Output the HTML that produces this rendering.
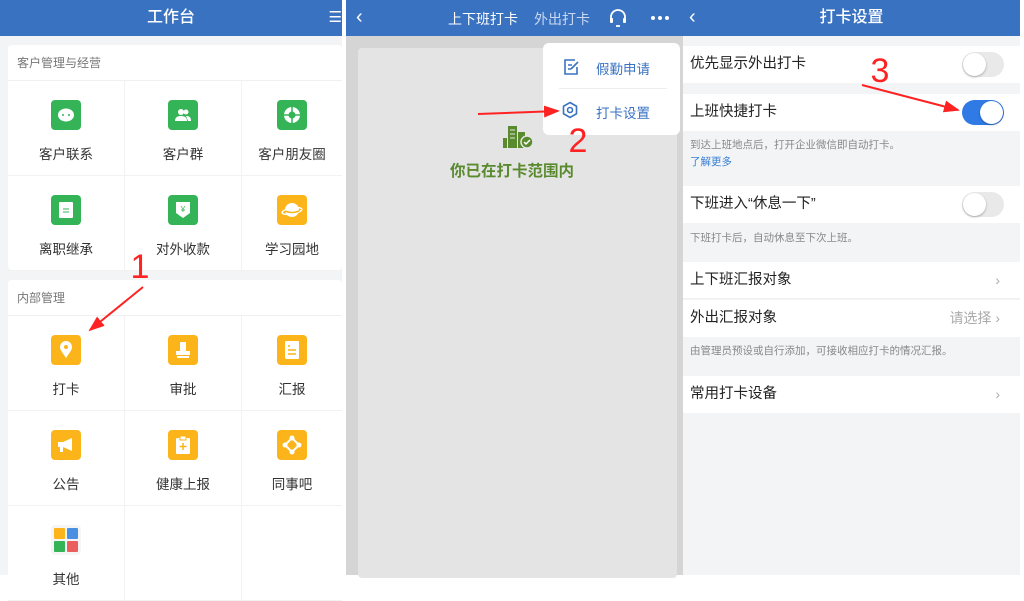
<!DOCTYPE html>
<html><head><meta charset="utf-8"><style>
*{margin:0;padding:0;box-sizing:border-box}
body{width:1024px;height:575px;overflow:hidden;background:#fff;font-family:"Liberation Sans","Noto Sans CJK SC",sans-serif;position:relative}
.abs{position:absolute}
.hdr{position:absolute;top:0;height:36px;background:#3a72c2;color:#fff;font-size:15px}
.p1{left:0;top:0;width:342px;height:575px;background:#f3f4f6}
.card{position:absolute;left:8px;width:334px;background:#fff;border-radius:4px}
.ch{height:36px;line-height:36px;padding-left:9px;font-size:12px;color:#777;border-bottom:1px solid #f0f0f0}
.grid{display:grid;grid-template-columns:117px 117px 100px}
.cell{height:95px;border-right:1px solid #f2f2f2;border-bottom:1px solid #f2f2f2;position:relative;text-align:center}
.cell:nth-child(3n){border-right:none}
.ic{position:absolute;left:50%;margin-left:-15px;top:19px;width:30px;height:30px;border-radius:4px;display:flex;align-items:center;justify-content:center}
.g{background:#35b357}.y{background:#fbb41a}
.lb{position:absolute;left:0;right:0;top:62px;font-size:13.5px;color:#333}
.p2{left:346px;top:0;width:337px;height:575px;background:#d5d5d5}
.p3{left:683px;top:0;width:337px;height:575px;background:#f3f4f6}
.row{position:absolute;left:0;width:337px;height:37px;background:#fff;font-size:14.5px;color:#222;line-height:37px;padding-left:7px}
.desc{position:absolute;left:7px;font-size:10.5px;color:#888}
.tg{position:absolute;left:279px;top:6px;width:42px;height:25px;border-radius:13px;background:#e9e9ea}
.tg::after{content:"";position:absolute;left:1px;top:1px;width:23px;height:23px;border-radius:50%;background:#fff;box-shadow:0 1px 2px rgba(0,0,0,.3)}
.tg.on{background:#2f7ae5}.tg.on::after{left:18px}
.arr{position:absolute;right:20px;top:0;color:#aaa;font-size:14px}
.tt{font-size:16px;font-weight:500}
</style></head><body>

<div class="abs p1">
 <div class="hdr tt" style="left:0;width:342px;text-align:center;line-height:36px">工作台<span style="position:absolute;right:0;top:0;font-size:15px">☰</span></div>
 <div class="card" style="top:45px;height:225px">
  <div class="ch">客户管理与经营</div>
  <div class="grid">
   <div class="cell"><div class="ic g"><svg width="18" height="16"><ellipse cx="9" cy="8" rx="8" ry="6.5" fill="#fff"/><circle cx="6" cy="8" r="1" fill="#35b357"/><circle cx="12" cy="8" r="1" fill="#35b357"/></svg></div><div class="lb">客户联系</div></div>
   <div class="cell"><div class="ic g"><svg width="18" height="16"><circle cx="7" cy="5" r="3" fill="#fff"/><path d="M1 14c0-4 3-5 6-5s6 1 6 5z" fill="#fff"/><circle cx="12" cy="5" r="2.5" fill="#fff"/><path d="M12 9c3 0 5 1 5 5h-3" fill="#fff"/></svg></div><div class="lb">客户群</div></div>
   <div class="cell"><div class="ic g"><svg width="18" height="18"><circle cx="9" cy="9" r="8" fill="#fff"/><circle cx="9" cy="9" r="3.5" fill="#35b357"/><path d="M9 1v5M17 9h-5M9 17v-5M1 9h5" stroke="#35b357" stroke-width="1.5"/></svg></div><div class="lb">客户朋友圈</div></div>
   <div class="cell"><div class="ic g"><svg width="14" height="16"><rect width="14" height="16" rx="1" fill="#fff"/><path d="M4 7h6M4 10h6" stroke="#35b357"/></svg></div><div class="lb">离职继承</div></div>
   <div class="cell"><div class="ic g"><svg width="16" height="18"><path d="M1 1h14v11l-7 5-7-5z" fill="#fff"/><text x="8" y="11" font-size="8" fill="#35b357" text-anchor="middle">¥</text></svg></div><div class="lb">对外收款</div></div>
   <div class="cell"><div class="ic y"><svg width="22" height="18"><circle cx="11" cy="9" r="7" fill="#fff"/><ellipse cx="11" cy="10" rx="10" ry="3" fill="none" stroke="#fff" stroke-width="1.5" transform="rotate(-10 11 10)"/><path d="M4 10q7 3 14 0" stroke="#fbb41a" stroke-width="1.5" fill="none"/></svg></div><div class="lb">学习园地</div></div>
  </div>
 </div>
 <div class="card" style="top:280px;height:300px">
  <div class="ch">内部管理</div>
  <div class="grid">
   <div class="cell"><div class="ic y"><svg width="14" height="18"><path d="M7 17C3 11 1 9 1 6a6 6 0 0112 0c0 3-2 5-6 11z" fill="#fff"/><circle cx="7" cy="6" r="2" fill="#fbb41a"/></svg></div><div class="lb">打卡</div></div>
   <div class="cell"><div class="ic y"><svg width="16" height="18"><rect x="5" y="1" width="6" height="9" rx="1" fill="#fff"/><rect x="1" y="10" width="14" height="4" fill="#fff"/><rect x="2" y="15" width="12" height="2" fill="#fff"/></svg></div><div class="lb">审批</div></div>
   <div class="cell"><div class="ic y"><svg width="14" height="18"><rect width="14" height="18" rx="1" fill="#fff"/><path d="M3 5h2M3 9h8M3 13h8" stroke="#fbb41a" stroke-width="1.5"/></svg></div><div class="lb">汇报</div></div>
   <div class="cell"><div class="ic y"><svg width="18" height="16"><path d="M1 5h5l9-4v13l-9-4H1z" fill="#fff"/><rect x="3" y="10" width="3" height="5" fill="#fff"/></svg></div><div class="lb">公告</div></div>
   <div class="cell"><div class="ic y"><svg width="14" height="18"><rect y="2" width="14" height="16" rx="1" fill="#fff"/><rect x="4" width="6" height="4" fill="#fff" stroke="#fbb41a"/><path d="M7 7v7M3.5 10.5h7" stroke="#fbb41a" stroke-width="1.5"/></svg></div><div class="lb">健康上报</div></div>
   <div class="cell"><div class="ic y"><svg width="20" height="20"><path d="M10 3L17 10L10 17L3 10Z" fill="none" stroke="#fff" stroke-width="2"/><circle cx="10" cy="3" r="2.5" fill="#fff"/><circle cx="17" cy="10" r="2.5" fill="#fff"/><circle cx="10" cy="17" r="2.5" fill="#fff"/><circle cx="3" cy="10" r="2.5" fill="#fff"/></svg></div><div class="lb">同事吧</div></div>
   <div class="cell"><div class="ic" style="background:#f5f5f5"><svg width="26" height="26"><rect x="1" y="1" width="11" height="11" rx="1" fill="#fbb41a"/><rect x="14" y="1" width="11" height="11" rx="1" fill="#4a90e2"/><rect x="1" y="14" width="11" height="11" rx="1" fill="#35b357"/><rect x="14" y="14" width="11" height="11" rx="1" fill="#ec5f5f"/></svg></div><div class="lb">其他</div></div>
   <div class="cell"></div><div class="cell"></div>
  </div>
 </div>
</div>

<div class="abs p2">
 <div class="hdr" style="left:0;width:337px">
  <span class="abs" style="left:10px;top:6px;font-size:20px">‹</span>
  <span class="abs" style="left:102px;top:9px;font-size:14px">上下班打卡</span>
  <span class="abs" style="left:188px;top:9px;font-size:14px;color:#c9d8ef">外出打卡</span>
  <svg class="abs" style="left:262px;top:8px" width="20" height="20"><path d="M3 11V9a7 7 0 0114 0v2" fill="none" stroke="#fff" stroke-width="1.8"/><rect x="2" y="10" width="3" height="5" rx="1" fill="#fff"/><rect x="15" y="10" width="3" height="5" rx="1" fill="#fff"/><path d="M8 18h4" stroke="#fff" stroke-width="1.8"/></svg>
  <svg class="abs" style="left:304px;top:15px" width="20" height="6"><circle cx="3" cy="3" r="2" fill="#fff"/><circle cx="10" cy="3" r="2" fill="#fff"/><circle cx="17" cy="3" r="2" fill="#fff"/></svg>
 </div>
 <div class="abs" style="left:12px;top:48px;width:319px;height:530px;background:#e4e4e4;border-radius:4px"></div>
 <svg class="abs" style="left:157px;top:124px" width="32" height="26"><rect x="0" y="14" width="4" height="10" fill="#5a8a2e"/><rect x="5" y="2" width="9" height="22" fill="#5a8a2e"/><rect x="15" y="8" width="7" height="16" fill="#5a8a2e"/><path d="M7 6h5M7 10h5M7 14h5" stroke="#e4e4e4"/><circle cx="24" cy="18" r="6" fill="#5a8a2e" stroke="#e4e4e4" stroke-width="1.5"/><path d="M21 18l2 2 4-4" stroke="#fff" stroke-width="1.5" fill="none"/></svg>
 <div class="abs" style="left:104px;top:159px;font-size:15.5px;color:#5a8a2e;font-weight:bold">你已在打卡范围内</div>
 <div class="abs" style="left:197px;top:43px;width:137px;height:92px;background:#fff;border-radius:6px">
  <svg class="abs" style="left:20px;top:16px" width="16" height="16"><path d="M12 1H2v14h12V8" fill="none" stroke="#3a72c2" stroke-width="1.6"/><path d="M5 6h4M5 10h3M8 10l7-7" stroke="#3a72c2" stroke-width="1.6"/></svg>
  <div class="abs" style="left:53px;top:15px;font-size:13.5px;color:#3a72c2">假勤申请</div>
  <div class="abs" style="left:16px;top:45px;width:108px;height:1px;background:#eee"></div>
  <svg class="abs" style="left:18px;top:58px" width="18" height="18"><path d="M9 1.5l6.5 3.75v7.5L9 16.5l-6.5-3.75v-7.5z" fill="none" stroke="#3a72c2" stroke-width="1.6"/><circle cx="9" cy="9" r="2.5" fill="none" stroke="#3a72c2" stroke-width="1.6"/></svg>
  <div class="abs" style="left:53px;top:59px;font-size:13.5px;color:#3a72c2">打卡设置</div>
 </div>
</div>

<div class="abs p3">
 <div class="hdr tt" style="left:0;width:337px;text-align:center;line-height:36px">打卡设置<span class="abs" style="left:6px;top:-1px;font-size:20px">‹</span></div>
 <div class="row" style="top:46px">优先显示外出打卡<div class="tg"></div></div>
 <div class="row" style="top:94px">上班快捷打卡<div class="tg on"></div></div>
 <div class="desc" style="top:137px">到达上班地点后，打开企业微信即自动打卡。</div>
 <div class="desc" style="top:154px;color:#3a80d5">了解更多</div>
 <div class="row" style="top:186px">下班进入“休息一下”<div class="tg"></div></div>
 <div class="desc" style="top:230px">下班打卡后，自动休息至下次上班。</div>
 <div class="row" style="top:262px;border-bottom:1px solid #f0f0f0">上下班汇报对象<span class="arr">›</span></div>
 <div class="row" style="top:300px">外出汇报对象<span class="arr">请选择 ›</span></div>
 <div class="desc" style="top:343px">由管理员预设或自行添加，可接收相应打卡的情况汇报。</div>
 <div class="row" style="top:376px">常用打卡设备<span class="arr">›</span></div>
</div>

<svg class="abs" style="left:0;top:0" width="1024" height="575">
 <defs><marker id="a" markerWidth="8" markerHeight="6" refX="7" refY="3" orient="auto"><path d="M0 0L8 3L0 6z" fill="#f22"/></marker></defs>
 <path d="M143 287L90 330" stroke="#f22" stroke-width="2" marker-end="url(#a)"/>
 <path d="M478 114L558 111" stroke="#f22" stroke-width="2" marker-end="url(#a)"/>
 <path d="M862 85L958 110" stroke="#f22" stroke-width="2" marker-end="url(#a)"/>
 <text x="140" y="278" font-size="34" fill="#f22" text-anchor="middle" font-family="Liberation Sans">1</text>
 <text x="578" y="152" font-size="34" fill="#f22" text-anchor="middle" font-family="Liberation Sans">2</text>
 <text x="880" y="82" font-size="34" fill="#f22" text-anchor="middle" font-family="Liberation Sans">3</text>
</svg>
</body></html>
